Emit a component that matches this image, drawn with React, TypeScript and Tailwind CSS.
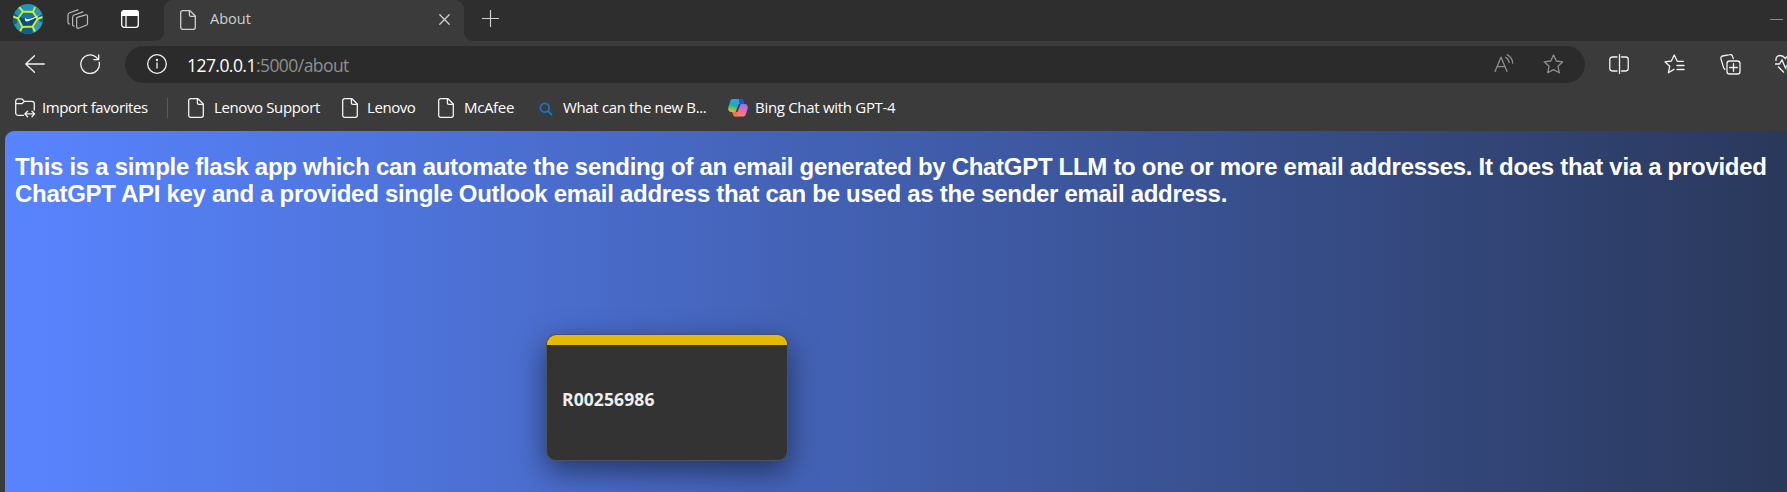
import React from "react";

type IconProps = { children: React.ReactNode; className?: string; sw?: number; w?: number; h?: number };

function Icon({ children, className = "", sw = 1.2, w = 20, h = 20 }: IconProps) {
  return (
    <svg
      width={w}
      height={h}
      viewBox={`0 0 ${w} ${h}`}
      fill="none"
      stroke="currentColor"
      strokeWidth={sw}
      strokeLinecap="round"
      strokeLinejoin="round"
      className={`block shrink-0 ${className}`}
    >
      {children}
    </svg>
  );
}

function PageIcon({ className = "" }: { className?: string }) {
  return (
    <Icon w={16} h={20} className={className} sw={1.3}>
      <path d="M2.600.7H10L15.300 6v11.300a2 2 0 0 1-2 2H2.700a2 2 0 0 1-2-2V2.700a2 2 0 0 1 2-2Z" />
      <path d="M9.400.9V5a1.400 1.400 0 0 0 1.400 1.400h4.300" />
    </Icon>
  );
}

function Profile() {
  return (
    <svg width="30" height="30" viewBox="0 0 30 30" className="block shrink-0">
      <defs>
        <clipPath id="ball">
          <circle cx="15" cy="15" r="15" />
        </clipPath>
        <linearGradient id="skin" x1="0" y1="0" x2="1" y2="1">
          <stop offset="0" stopColor="#1790b4" />
          <stop offset="1" stopColor="#3f9cb6" />
        </linearGradient>
      </defs>
      <g clipPath="url(#ball)">
        <rect width="30" height="30" fill="url(#skin)" />
        <path d="M0 8l5 4-1 7-4 2ZM25 12l5-2v9l-4-2ZM9 24l10-1 1 7H8Z" fill="#0f5f8c" />
        <path d="M10 7l10 1 4.500 7-5 8H9.500L4.500 14Z" fill="#0a4c7c" />
        <path d="M10 7l10 1 2 4-8 4-7-3Z" fill="#1478a4" />
        <path
          d="M10 7.500 20 8l4.500 7-5 7.500-10 .5-4.500-8.500ZM10 7.500 6 3M20 8l2-5M24.500 15l5-2M19.500 22.500l2.500 5M9.500 23 7 27M5 14.500l-5-2"
          fill="none"
          stroke="#c8ee2e"
          strokeWidth="1.900"
        />
        <path d="M12.500 13.500c-1.500 2.500-.5 4.500 2.500 3.700 4-1 8.500-4 12-6.200-4.500 1.800-8.500 3.500-11.500 4-2 .3-3.100-.2-3-1.500Z" fill="#e8f1f4" />
      </g>
    </svg>
  );
}

function Header() {
  return (
    <div className="flex h-[41px] w-full bg-[#2e2e2e]">
      <div className="h-full w-[164px] shrink-0 bg-[#3b3b3b]">
        <div className="flex h-full items-start rounded-br-[9px] bg-[#2e2e2e] pl-[13px] pt-[4px]">
          <Profile />
          <Icon w={22} h={21} className="ml-[24px] mt-[5px] text-[#b9b9b9]" sw={1.2}>
            <path d="M10.200 8.300 18.800 5.800a1.300 1.300 0 0 1 1.700 1.200v7.600a1.800 1.800 0 0 1-1.200 1.600l-7.800 3a1.300 1.300 0 0 1-1.800-1.200V10a1.700 1.700 0 0 1 .500-1.700Z" />
            <path d="M5.600 15.900V8.200a2.400 2.400 0 0 1 1.600-2.200l8.600-3.100M7 17.200a1.600 1.600 0 0 1-1.400-1.600" />
            <path d="M1 13.600V6a2.400 2.400 0 0 1 1.600-2.200L11 .9M2.600 15A1.600 1.600 0 0 1 1 13.400" />
          </Icon>
          <Icon w={18} h={18} className="ml-[32px] mt-[6px] text-white" sw={1.3}>
            <rect x=".7" y=".7" width="16.600" height="16.600" rx="2.600" />
            <path d="M.7 5.400V3.300A2.600 2.600 0 0 1 3.300 .7h11.400a2.600 2.600 0 0 1 2.600 2.600v2.100Z" fill="currentColor" />
            <path d="M5 6v11" />
          </Icon>
        </div>
      </div>
      <div className="h-full w-[300px] shrink-0 bg-[#2e2e2e]">
        <div className="flex h-full items-start rounded-t-[9px] bg-[#3b3b3b] pl-[16px] pt-[10px] text-[#cfcfcf]">
          <PageIcon />
          <span className="ml-[14px] mt-[-1px] w-[229px] whitespace-nowrap text-[14.500px] leading-[20px]">About</span>
          <Icon w={11} h={11} className="mt-[4px]" sw={1.300}>
            <path d="M.8.8l9.400 9.400M10.200.8.8 10.200" />
          </Icon>
        </div>
      </div>
      <div className="h-full grow bg-[#3b3b3b]">
        <div className="flex h-full items-start justify-between rounded-bl-[9px] bg-[#2e2e2e] pl-[18px] pr-[4px] text-[#cfcfcf]">
          <Icon w={17} h={17} className="mt-[10px]" sw={1.2}>
            <path d="M8.500.5v16M.5 8.500h16" />
          </Icon>
          <div className="mt-[19px] h-px w-[13px] bg-[#8a8a8a]" />
        </div>
      </div>
    </div>
  );
}

function Toolbar() {
  return (
    <div className="flex h-[46px] w-full items-start overflow-hidden pt-[5px] text-[#f2f2f2]">
      <Icon w={20} h={18} className="ml-[25px] mt-[9px]" sw={1.3}>
        <path d="M19.300 9H.8M9.500.7.8 9l8.700 8.300" />
      </Icon>
      <Icon w={21} h={20} className="ml-[35px] mt-[8px]" sw={1.3}>
        <path d="M19.200 8.200A9.300 9.300 0 1 1 15.600 2.700L18.400 5.400" />
        <path d="M18.700.8v4.800h-4.900" />
      </Icon>
      <div className="ml-[24px] flex h-[37px] w-[1460px] shrink-0 items-start rounded-full bg-[#2b2b2b]">
        <Icon w={20} h={20} className="ml-[22px] mt-[8px]" sw={1.3}>
          <circle cx="10" cy="10" r="9.300" />
          <path d="M10 9v5" />
          <circle cx="10" cy="6" r=".5" fill="currentColor" />
        </Icon>
        <div className="ml-[20px] mt-[7px] whitespace-nowrap text-[17.500px] leading-[24px] tracking-[-0.55px] text-white">
          127.0.0.1<span className="text-[#8f8f8f]">:5000/about</span>
        </div>
        <Icon w={20} h={19} className="ml-auto mt-[8px] text-[#8f8f8f]" sw={1.3}>
          <path d="M1 17.400 7 3.200l6 14.200M3 12.600h8" />
          <path d="M11.500 3.200a7 7 0 0 1 3.600 5.200M13.200.8c3.500 1.600 5.200 4.600 5.600 8.400" />
        </Icon>
        <Icon w={21} h={20} className="ml-[29px] mr-[21px] mt-[8px] text-[#8f8f8f]" sw={1.3}>
          <path d="M10.500 1l2.800 6 6.500.8-4.800 4.500 1.300 6.500-5.800-3.200-5.800 3.200L6 12.300 1.200 7.800 7.700 7Z" />
        </Icon>
      </div>
      <Icon w={20} h={20} className="ml-[24px] mt-[8px]" sw={1.3}>
        <path d="M8 3H3.200A2.400 2.400 0 0 0 .8 5.400v9.200A2.400 2.400 0 0 0 3.200 17H8M12.500 3h4.300a2.400 2.400 0 0 1 2.400 2.400v9.200a2.400 2.400 0 0 1-2.400 2.400h-4.300M10.500.6v18.800" />
      </Icon>
      <Icon w={21} h={20} className="ml-[35px] mt-[8px]" sw={1.3}>
        <path d="M19.400 7.300h-6.100L10.200 1 7.400 7 .9 7.800l4.800 4.500-1.300 6.500L10 15.400M13 11.500h7M13 15.500h7" />
      </Icon>
      <Icon w={21} h={21} className="ml-[35px] mt-[8px]" sw={1.3}>
        <path d="M5 15.300a2.600 2.600 0 0 1-1.400-1.700L.9 4.700A2.200 2.200 0 0 1 2.500 2l7.200-1.300A2.200 2.200 0 0 1 12.400 2l.8 2.600" />
        <rect x="7" y="7" width="13" height="13" rx="2.600" />
        <path d="M13.500 9.700v7.600M9.700 13.500h7.600" />
      </Icon>
      <svg width="13" height="22" viewBox="0 0 13 22" className="ml-[34px] mt-[7px] block shrink-0" fill="none" stroke="#f2f2f2" strokeWidth="1.300">
        <path d="M1 8C.5 4.500 2.500 2.500 5 2.500c2.400 0 4 1.200 5.500 3 .8-1.500 1.800-2.400 3-2.800M0 11h4.500L7 7l3.500 8 2.500-4M3 13.500l6 6" />
        <circle cx="15.500" cy="15.500" r="4.500" fill="#3da648" stroke="none" />
      </svg>
    </div>
  );
}

function Bookmarks() {
  return (
    <div className="flex h-[44px] w-full items-start pt-[11px] text-[15px] leading-[20px] text-white">
      <Icon w={21} h={20} className="ml-[15px] text-[#f2f2f2]" sw={1.3}>
        <path d="M8.500 17.300H3.100A2.400 2.400 0 0 1 .7 14.900V3.200A2.400 2.400 0 0 1 3.100.8H6.700l2.700 2.600h7.500a2.400 2.400 0 0 1 2.400 2.400V12M.7 5.700h6L9.400 3.400M12.500 13.200 9.900 15.900 12.500 18.700M17 13.200l2.600 2.700-2.600 2.800M9.900 15.900h9.700" />
      </Icon>
      <span className="ml-[6px] mt-[-1px] w-[125px] whitespace-nowrap tracking-[-0.42px]">Import favorites</span>
      <span className="h-[20px] w-px bg-[#5c5c5c]" />
      <PageIcon className="ml-[20px] text-[#f2f2f2]" />
      <span className="ml-[10px] mt-[-1px] w-[128px] whitespace-nowrap tracking-[-0.38px]">Lenovo Support</span>
      <PageIcon className="text-[#f2f2f2]" />
      <span className="ml-[9px] mt-[-1px] w-[71px] whitespace-nowrap tracking-[-0.42px]">Lenovo</span>
      <PageIcon className="text-[#f2f2f2]" />
      <span className="ml-[10px] mt-[-1px] w-[75px] whitespace-nowrap tracking-[-0.35px]">McAfee</span>
      <Icon w={14} h={14} className="mt-[4px] text-[#1a74c9]" sw={1.8}>
        <circle cx="5.800" cy="5.800" r="4.400" />
        <path d="M9.200 9.200l3.300 3.300" />
      </Icon>
      <span className="ml-[10px] mt-[-1px] w-[165px] whitespace-nowrap tracking-[-0.35px]">What can the new B...</span>
      <svg width="20" height="20" viewBox="0 0 20 20" className="block shrink-0">
        <defs>
          <linearGradient id="cl" x1=".3" y1="0" x2="0" y2="1">
            <stop offset="0" stopColor="#1fa5f5" />
            <stop offset=".4" stopColor="#23a8b8" />
            <stop offset=".7" stopColor="#7cc44a" />
            <stop offset="1" stopColor="#f3c228" />
          </linearGradient>
          <linearGradient id="cr" x1=".6" y1="0" x2=".2" y2="1">
            <stop offset="0" stopColor="#a070ee" />
            <stop offset=".5" stopColor="#f06aa8" />
            <stop offset="1" stopColor="#ff8a50" />
          </linearGradient>
        </defs>
        <path d="M5 1h8c1.500 0 2 1 2.300 2.200L16 6h-4.300L8.500 14H3.500C.8 14-.3 12 .3 9.500L2.300 3C2.800 1.600 3.600 1 5 1Z" fill="url(#cl)" />
        <path d="M11 1h2c1.500 0 2 1 2.300 2.200L16 6h-3.500c-1.500 0-1.500-2-1.500-5Z" fill="#1a55d2" />
        <path d="M15 18.500H7.500C6 18.500 5.200 17.500 4.800 16L4.300 14H8l3.500-8h5c2.700 0 3.800 2 3.200 4.500l-2 6c-.5 1.400-1.300 2-2.700 2Z" fill="url(#cr)" />
        <path d="M4.300 14H8c.8 0 1 3 1.500 4.500h-2C6 18.500 5.200 17.500 4.800 16Z" fill="#f2743c" />
        <path d="M10.800 6h1.900L9.500 14H7.600Z" fill="#33405c" />
      </svg>
      <span className="ml-[7px] mt-[-1px] whitespace-nowrap tracking-[-0.3px]">Bing Chat with GPT-4</span>
    </div>
  );
}

export default function App() {
  return (
    <div className="flex h-[492px] w-full flex-col overflow-hidden bg-[#3b3b3b] font-['Open_Sans','Noto_Sans',sans-serif]">
      <Header />
      <Toolbar />
      <Bookmarks />
      <main className="ml-[5px] flex grow flex-col items-start rounded-tl-[9px] bg-linear-to-r/srgb from-[#5884ff] to-[#2a385b] pl-[10px] pt-[22px]">
        <h1 className="whitespace-nowrap font-['Liberation_Sans',sans-serif] text-[24px] font-bold leading-[27px] tracking-[-0.3px] text-white">
          This is a simple flask app which can automate the sending of an email generated by ChatGPT LLM to one or more email addresses. It does that via a provided
          <br />
          ChatGPT API key and a provided single Outlook email address that can be used as the sender email address.
        </h1>
        <section className="ml-[531px] mt-[127px] h-[127px] w-[242px] overflow-hidden rounded-[10px] border border-[#4d5268] bg-[#333333] shadow-[0_10px_30px_rgba(0,0,0,0.5)]">
          <div className="h-[10px] bg-[#e6b905]" />
          <p className="pl-[15px] pt-[42px] text-[17.500px] font-bold leading-[24px] tracking-[0.1px] text-[#eeeeee]">R00256986</p>
        </section>
      </main>
    </div>
  );
}
